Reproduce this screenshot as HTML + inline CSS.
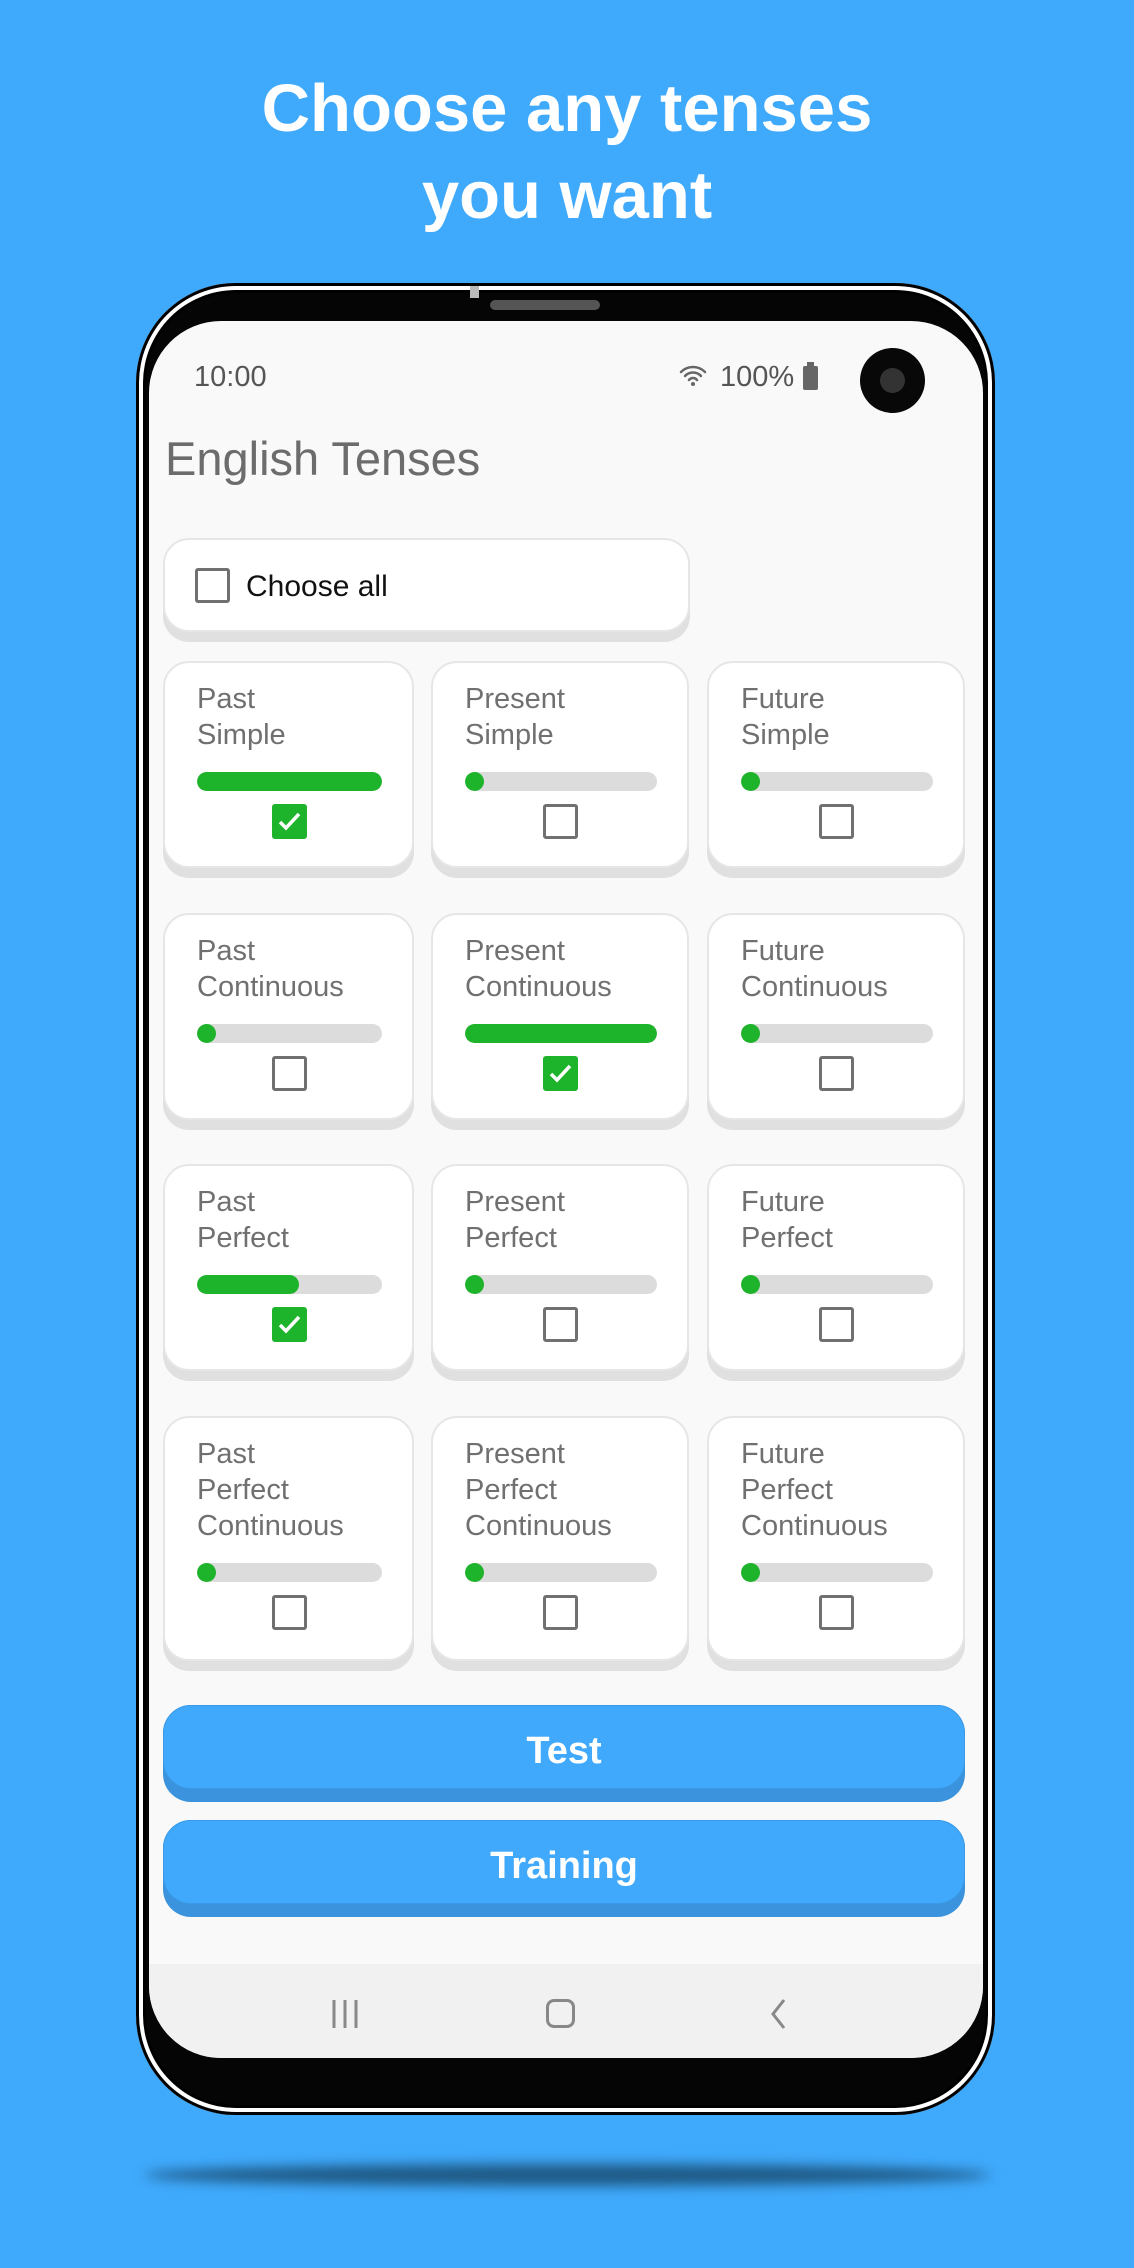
<!DOCTYPE html>
<html><head><meta charset="utf-8"><style>
*{margin:0;padding:0;box-sizing:border-box}
body{width:1134px;height:2268px;background:#3fa9fb;position:relative;overflow:hidden;font-family:"Liberation Sans",sans-serif}
.h{position:absolute;left:0;width:1134px;text-align:center;color:#fff;font-size:67px;font-weight:bold;line-height:86px}
.shadow{position:absolute;left:145px;top:2164px;width:845px;height:22px;border-radius:50%;background:#1f5a86;filter:blur(6px)}
.phone{position:absolute;left:136px;top:283px;width:859px;height:1832px;border-radius:100px;background:#050505;box-shadow:inset 0 0 0 3px #000,inset 0 0 0 7px #fff,inset 0 0 0 10px #000}
.screen{position:absolute;left:149px;top:321px;width:834px;height:1737px;border-radius:72px;background:#f9f9f9;overflow:hidden}
.ab{position:absolute}
.card{position:absolute;background:#fff;border:2px solid #e6e6e6;border-radius:26px;box-shadow:0 10px 0 #e0e0e0}
.t{position:absolute;left:32px;top:18px;font-size:29px;line-height:36px;color:#707070}
.bar{position:absolute;left:32px;height:19px;border-radius:10px;background:#dcdcdc;overflow:hidden}
.bar i{position:absolute;left:0;top:0;height:19px;border-radius:10px;background:#1db32a;display:block}
.cb{position:absolute;width:35px;height:35px;border:3px solid #707070;border-radius:3px}
.cb.on{background:#1db32a;border-color:#1db32a}
.btn{position:absolute;left:163px;width:802px;height:97px;border-radius:28px;background:#3a93dc}
.btn div{height:84px;border-radius:28px;background:#40a9fb;color:#fff;font-weight:bold;font-size:38px;line-height:90px;text-align:center;border:1px solid #3a9ae8}
</style></head><body>
<div class="h" style="top:66px">Choose any tenses</div>
<div class="h" style="top:153px">you want</div>
<div class="shadow"></div>
<div class="phone"></div>
<div class="ab" style="left:470px;top:286px;width:9px;height:12px;background:#bbb"></div>
<div class="ab" style="left:490px;top:300px;width:110px;height:10px;border-radius:5px;background:#555"></div>
<div class="screen">
 <div class="ab" style="left:0;top:1643px;width:834px;height:94px;background:#f1f1f1"></div>
</div>
<div class="ab" style="left:194px;top:361px;font-size:29px;color:#555">10:00</div>
<svg class="ab" style="left:678px;top:364px" width="30" height="24" viewBox="0 0 30 24"><g fill="none" stroke="#666" stroke-width="2.5" stroke-linecap="round"><path d="M3 8a17 17 0 0 1 24 0"/><path d="M7 12a11 11 0 0 1 16 0"/><path d="M11 16a5 5 0 0 1 8 0"/></g><circle cx="15" cy="20" r="2" fill="#666"/></svg>
<div class="ab" style="left:720px;top:361px;font-size:29px;color:#555">100%</div>
<div class="ab" style="left:803px;top:366px;width:15px;height:24px;background:#666;border-radius:2px"></div>
<div class="ab" style="left:807px;top:362px;width:7px;height:5px;background:#666"></div>
<div class="ab" style="left:860px;top:348px;width:65px;height:65px;border-radius:50%;background:#080808"></div>
<div class="ab" style="left:880px;top:368px;width:25px;height:25px;border-radius:50%;background:#333"></div>
<div class="ab" style="left:165px;top:431px;font-size:47px;color:#6c6c6c">English Tenses</div>

<div class="card" style="left:163px;top:538px;width:527px;height:94px">
 <div class="cb" style="left:30px;top:28px"></div>
 <div class="ab" style="left:81px;top:30px;font-size:30px;color:#111">Choose all</div>
</div>

<div id="g"></div>
<script>
var cols=[[163,251],[431,258],[707,258]];
var rows=[{y:661,h:207,n:2},{y:913,h:207,n:2},{y:1164,h:207,n:2},{y:1416,h:245,n:3}];
var names=[["Past","Present","Future"]];
var second=[["Simple"],["Continuous"],["Perfect"],["Perfect","Continuous"]];
var fill=[[100,0,0],[0,100,0],[55,0,0],[0,0,0]];
var h="";
for(var r=0;r<4;r++){for(var c=0;c<3;c++){
 var x=cols[c][0],w=cols[c][1],R=rows[r];
 var lines=[names[0][c]].concat(second[r]);
 var txt=lines.join("<br>");
 var by=16+36*R.n+21;
 var bw=w-66;
 var f=fill[r][c];
 var iw=f?Math.round(bw*f/100):19;
 h+='<div class="card" style="left:'+x+'px;top:'+R.y+'px;width:'+w+'px;height:'+R.h+'px">'+
 '<div class="t">'+txt+'</div>'+
 '<div class="bar" style="top:'+by+'px;width:'+bw+'px"><i style="width:'+iw+'px"></i></div>'+
 '<div class="cb'+(f?' on':'')+'" style="left:'+Math.round(w/2-19)+'px;top:'+(by+32)+'px">'+
 (f?'<svg width="29" height="29" viewBox="0 0 29 29" style="position:absolute;left:0;top:0"><path d="M5 15l6 6 13-14" fill="none" stroke="#fff" stroke-width="3.5"/></svg>':'')+'</div></div>';
}}
document.getElementById("g").outerHTML=h;
</script>

<div class="btn" style="top:1705px"><div>Test</div></div>
<div class="btn" style="top:1820px"><div>Training</div></div>

<svg class="ab" style="left:328px;top:1998px" width="34" height="32"><g stroke="#888" stroke-width="3"><path d="M6 2v28M17 2v28M28 2v28"/></g></svg>
<div class="ab" style="left:546px;top:1999px;width:29px;height:29px;border:3px solid #888;border-radius:8px"></div>
<svg class="ab" style="left:766px;top:1997px" width="24" height="34"><path d="M18 3L7 17l11 14" fill="none" stroke="#888" stroke-width="3"/></svg>
</body></html>
